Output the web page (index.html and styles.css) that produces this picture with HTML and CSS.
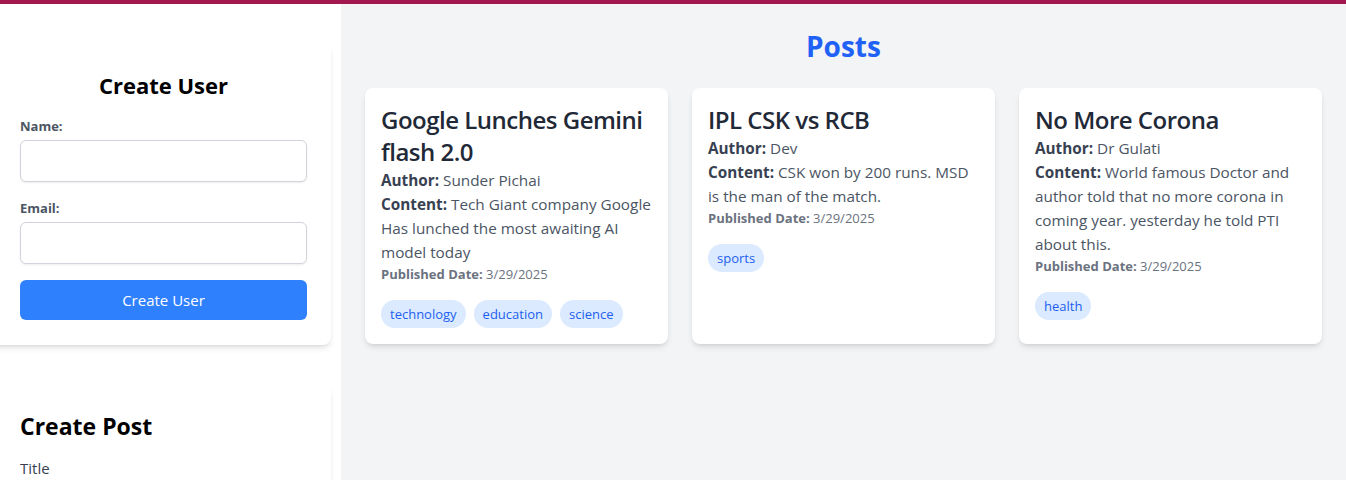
FILE: index.html
```html
<!DOCTYPE html>
<html>
<head>
<meta charset="utf-8">
<link rel="stylesheet" href="styles.css">
</head>
<body>
<div class="app">
  <aside class="sidebar">
    <section class="panel">
      <h2 class="panel-title center">Create User</h2>
      <label class="field-label">Name:</label>
      <input class="field-input" type="text">
      <label class="field-label">Email:</label>
      <input class="field-input" type="text">
      <button class="btn">Create User</button>
    </section>
    <section class="panel panel-post">
      <h2 class="panel-title">Create Post</h2>
      <label class="field-label plain">Title</label>
    </section>
  </aside>
  <main class="main">
    <h1 class="page-title">Posts</h1>
    <div class="grid">
      <article class="card">
        <h3 class="card-title">Google Lunches Gemini flash 2.0</h3>
        <p class="line"><b>Author:</b> Sunder Pichai</p>
        <p class="line"><b>Content:</b> Tech Giant company Google Has lunched the most awaiting AI model today</p>
        <p class="date"><b>Published Date:</b> 3/29/2025</p>
        <div class="tags"><span class="tag">technology</span><span class="tag">education</span><span class="tag">science</span></div>
      </article>
      <article class="card">
        <h3 class="card-title">IPL CSK vs RCB</h3>
        <p class="line"><b>Author:</b> Dev</p>
        <p class="line"><b>Content:</b> CSK won by 200 runs. MSD is the man of the match.</p>
        <p class="date"><b>Published Date:</b> 3/29/2025</p>
        <div class="tags"><span class="tag">sports</span></div>
      </article>
      <article class="card">
        <h3 class="card-title">No More Corona</h3>
        <p class="line"><b>Author:</b> Dr Gulati</p>
        <p class="line"><b>Content:</b> World famous Doctor and author told that no more corona in coming year. yesterday he told PTI about this.</p>
        <p class="date"><b>Published Date:</b> 3/29/2025</p>
        <div class="tags"><span class="tag">health</span></div>
      </article>
    </div>
  </main>
</div>
</body>
</html>
```

FILE: styles.css
```css
* { box-sizing: border-box; }
html, body { margin: 0; padding: 0; }
body {
  font-family: "Open Sans", "Noto Sans", sans-serif;
  border-top: 4px solid #a3174f;
  height: 480px;
  overflow: hidden;
  background: #f3f4f6;
}
.app {
  display: flex;
  height: 476px;
  overflow: hidden;
}
.sidebar {
  width: 341px;
  flex: none;
  background: #fff;
  padding: 40px 10px 0 0;
  display: flex;
  flex-direction: column;
  gap: 40px;
}
.panel {
  margin-left: -10px;
  background: #fff;
  border-radius: 8px;
  box-shadow: 0 4px 6px -1px rgba(0,0,0,0.1), 0 2px 4px -2px rgba(0,0,0,0.1);
  padding: 23px 24px 24px 30px;
  display: flex;
  flex-direction: column;
  flex: none;
}
.panel-title {
  margin: 4px 0 18px;
  font-size: 22px;
  line-height: 28px;
  font-weight: 700;
  color: #000;
}
.panel-title.center { text-align: center; }
.panel-post .panel-title { font-size: 23px; margin-bottom: 19px; }
.field-label {
  font-size: 13px;
  line-height: 18px;
  font-weight: 700;
  color: #4b5563;
  margin-bottom: 5px;
}
.field-label.plain {
  font-weight: 400;
  font-size: 15px;
  color: #374151;
}
.field-input {
  height: 42px;
  border: 1px solid #d1d5db;
  border-radius: 6px;
  box-shadow: 0 1px 2px rgba(0,0,0,0.08);
  margin-bottom: 17px;
  font: inherit;
}
.btn {
  height: 40px;
  border: none;
  border-radius: 6px;
  background: #2f80fd;
  color: #fff;
  font-family: inherit;
  font-size: 15px;
  margin-top: -1px;
  margin-bottom: 1px;
}
.main {
  flex: 1;
  padding: 24px;
}
.page-title {
  margin: 0 0 24px;
  text-align: center;
  font-size: 28px;
  line-height: 36px;
  font-weight: 700;
  color: #1f62f5;
}
.grid {
  display: grid;
  grid-template-columns: repeat(3, 1fr);
  gap: 24px;
  align-items: stretch;
}
.card {
  background: #fff;
  border-radius: 8px;
  box-shadow: 0 4px 6px -1px rgba(0,0,0,0.1), 0 2px 4px -2px rgba(0,0,0,0.1);
  padding: 16px;
}
.card-title {
  margin: 0;
  font-size: 24px;
  line-height: 32px;
  font-weight: 600;
  letter-spacing: -0.5px;
  color: #1f2937;
}
.line {
  margin: 0;
  font-size: 15.3px;
  line-height: 24px;
  color: #4b5563;
}
.line b { color: #374151; }
.date {
  margin: 0;
  font-size: 13px;
  line-height: 20px;
  color: #6b7280;
}
.date b { color: #6b7280; }
.tags {
  margin-top: 16px;
  display: flex;
  gap: 8px;
}
.tag {
  background: #dbeafe;
  color: #1d5ff0;
  border-radius: 9999px;
  padding: 4px 9px;
  font-size: 13px;
  line-height: 20px;
}
```
